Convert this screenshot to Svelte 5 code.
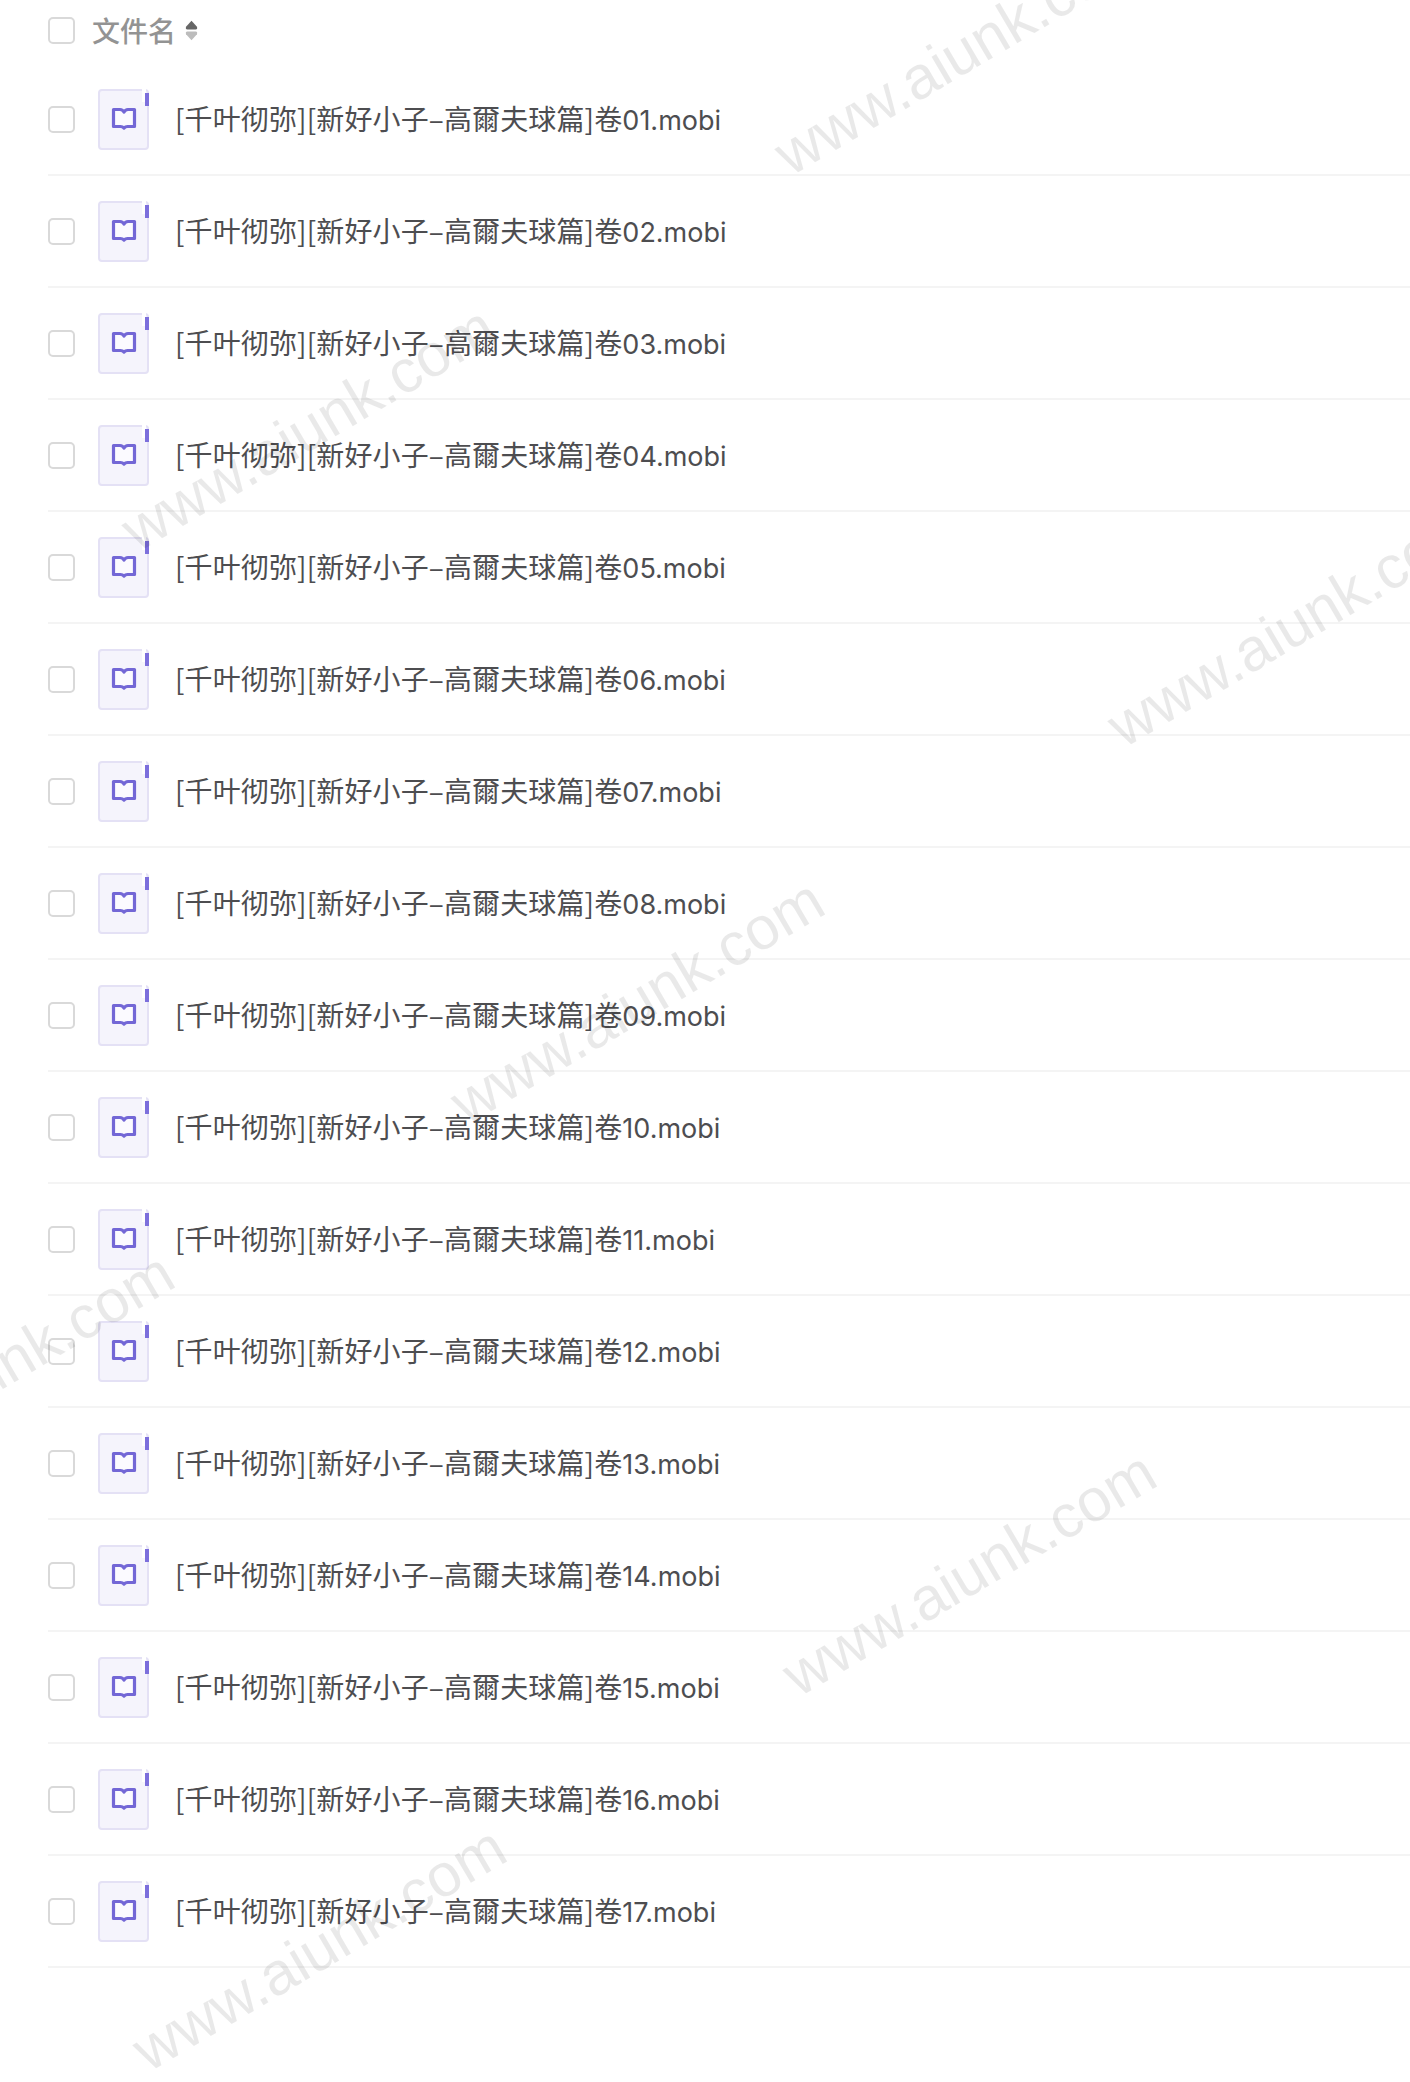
<script lang="ts">
	const files = Array.from({ length: 17 }, (_, i) => ({
		title: '[千叶彻弥][新好小子–高爾夫球篇]卷',
		ext: `${String(i + 1).padStart(2, '0')}.mobi`
	}));

	// centre of each repeated watermark
	const marks = [
		[961, 52],
		[308, 428],
		[1294, 624],
		[637, 1001],
		[-13, 1374],
		[969, 1573],
		[319, 1948]
	];
</script>

<main>
	<div class="list">
		<div class="head">
			<span class="check"></span>
			<span class="title">文件名</span>
			<svg class="sort" viewBox="0 0 12 20" width="13" height="21" aria-hidden="true">
				<path d="M6 .8 L11.200 6.500 Q12 9 10 9 H2 Q0 9 .8 6.500 Z" fill="#666" />
				<path d="M6 19.200 L11.200 13.500 Q12 11 10 11 H2 Q0 11 .8 13.500 Z" fill="#bcbcbc" />
			</svg>
		</div>

		{#each files as file}
			<div class="row">
				<span class="check"></span>
				<span class="doc">
					<svg viewBox="0 0 26 24" width="26" height="24" aria-hidden="true">
						<path
							d="M2.500 2.500h6.500c1.800 0 3.200.9 4 2.600.8-1.700 2.200-2.600 4-2.600h6.500v17h-7c-1.300 0-2.400.4-3.500 1.500-1.100-1.100-2.200-1.500-3.500-1.500h-7z"
							fill="#fbfaff"
							stroke="#7367d6"
							stroke-width="3.200"
							stroke-linejoin="round"
						/>
					</svg>
				</span>
				<span class="name">{file.title}<span class="ext">{file.ext}</span></span>
			</div>
		{/each}
	</div>

	<div class="marks">
		{#each marks as [x, y]}
			<span class="mark" style="left: {x}px; top: {y}px">www.aiunk.com</span>
		{/each}
	</div>
</main>

<style>
	:global(body) {
		margin: 0;
		background: #fff;
	}

	main {
		position: relative;
		height: 2082px;
		overflow: hidden;
		font-family: 'Noto Sans CJK SC', 'Liberation Sans', sans-serif;
	}

	.list {
		padding-left: 48px;
	}

	.head {
		display: flex;
		align-items: center;
		height: 64px;
		padding-bottom: 4px;
		box-sizing: border-box;
	}

	.title {
		margin-left: 17px;
		font-size: 28px;
		font-weight: 500;
		color: #939393;
	}

	.sort {
		margin-left: 9px;
	}

	.row {
		display: flex;
		align-items: center;
		height: 112px;
		box-sizing: border-box;
		border-bottom: 2px solid #f4f4f4;
	}

	.check {
		flex: none;
		width: 27px;
		height: 27px;
		box-sizing: border-box;
		border: 2px solid #d9d9d9;
		border-radius: 5px;
		background: #fff;
	}

	.doc {
		position: relative;
		flex: none;
		display: flex;
		align-items: center;
		justify-content: center;
		width: 51px;
		height: 61px;
		margin-left: 23px;
		box-sizing: border-box;
		border: 2px solid #e4e1f5;
		border-radius: 4px;
		background: #f5f4fc;
	}

	/* folded corner tab */
	.doc::after {
		content: '';
		position: absolute;
		top: 2px;
		right: -2px;
		width: 4px;
		height: 13px;
		background: #7c6fdc;
		box-shadow: -3px -4px 0 0 #fff;
	}

	.name {
		margin-left: 26px;
		padding-bottom: 2px;
		font-size: 28px;
		letter-spacing: 0.13px;
		color: #4d4d50;
		white-space: nowrap;
	}

	.ext {
		font-family: Inter, 'Liberation Sans', sans-serif;
		font-size: 27px;
		letter-spacing: 0;
	}

	.marks {
		position: absolute;
		inset: 0;
		pointer-events: none;
	}

	.mark {
		position: absolute;
		transform: translate(-50%, -50%) rotate(-30.500deg);
		font-family: 'Liberation Sans', sans-serif;
		font-size: 60.500px;
		color: rgba(0, 0, 0, 0.085);
		white-space: nowrap;
	}
</style>
